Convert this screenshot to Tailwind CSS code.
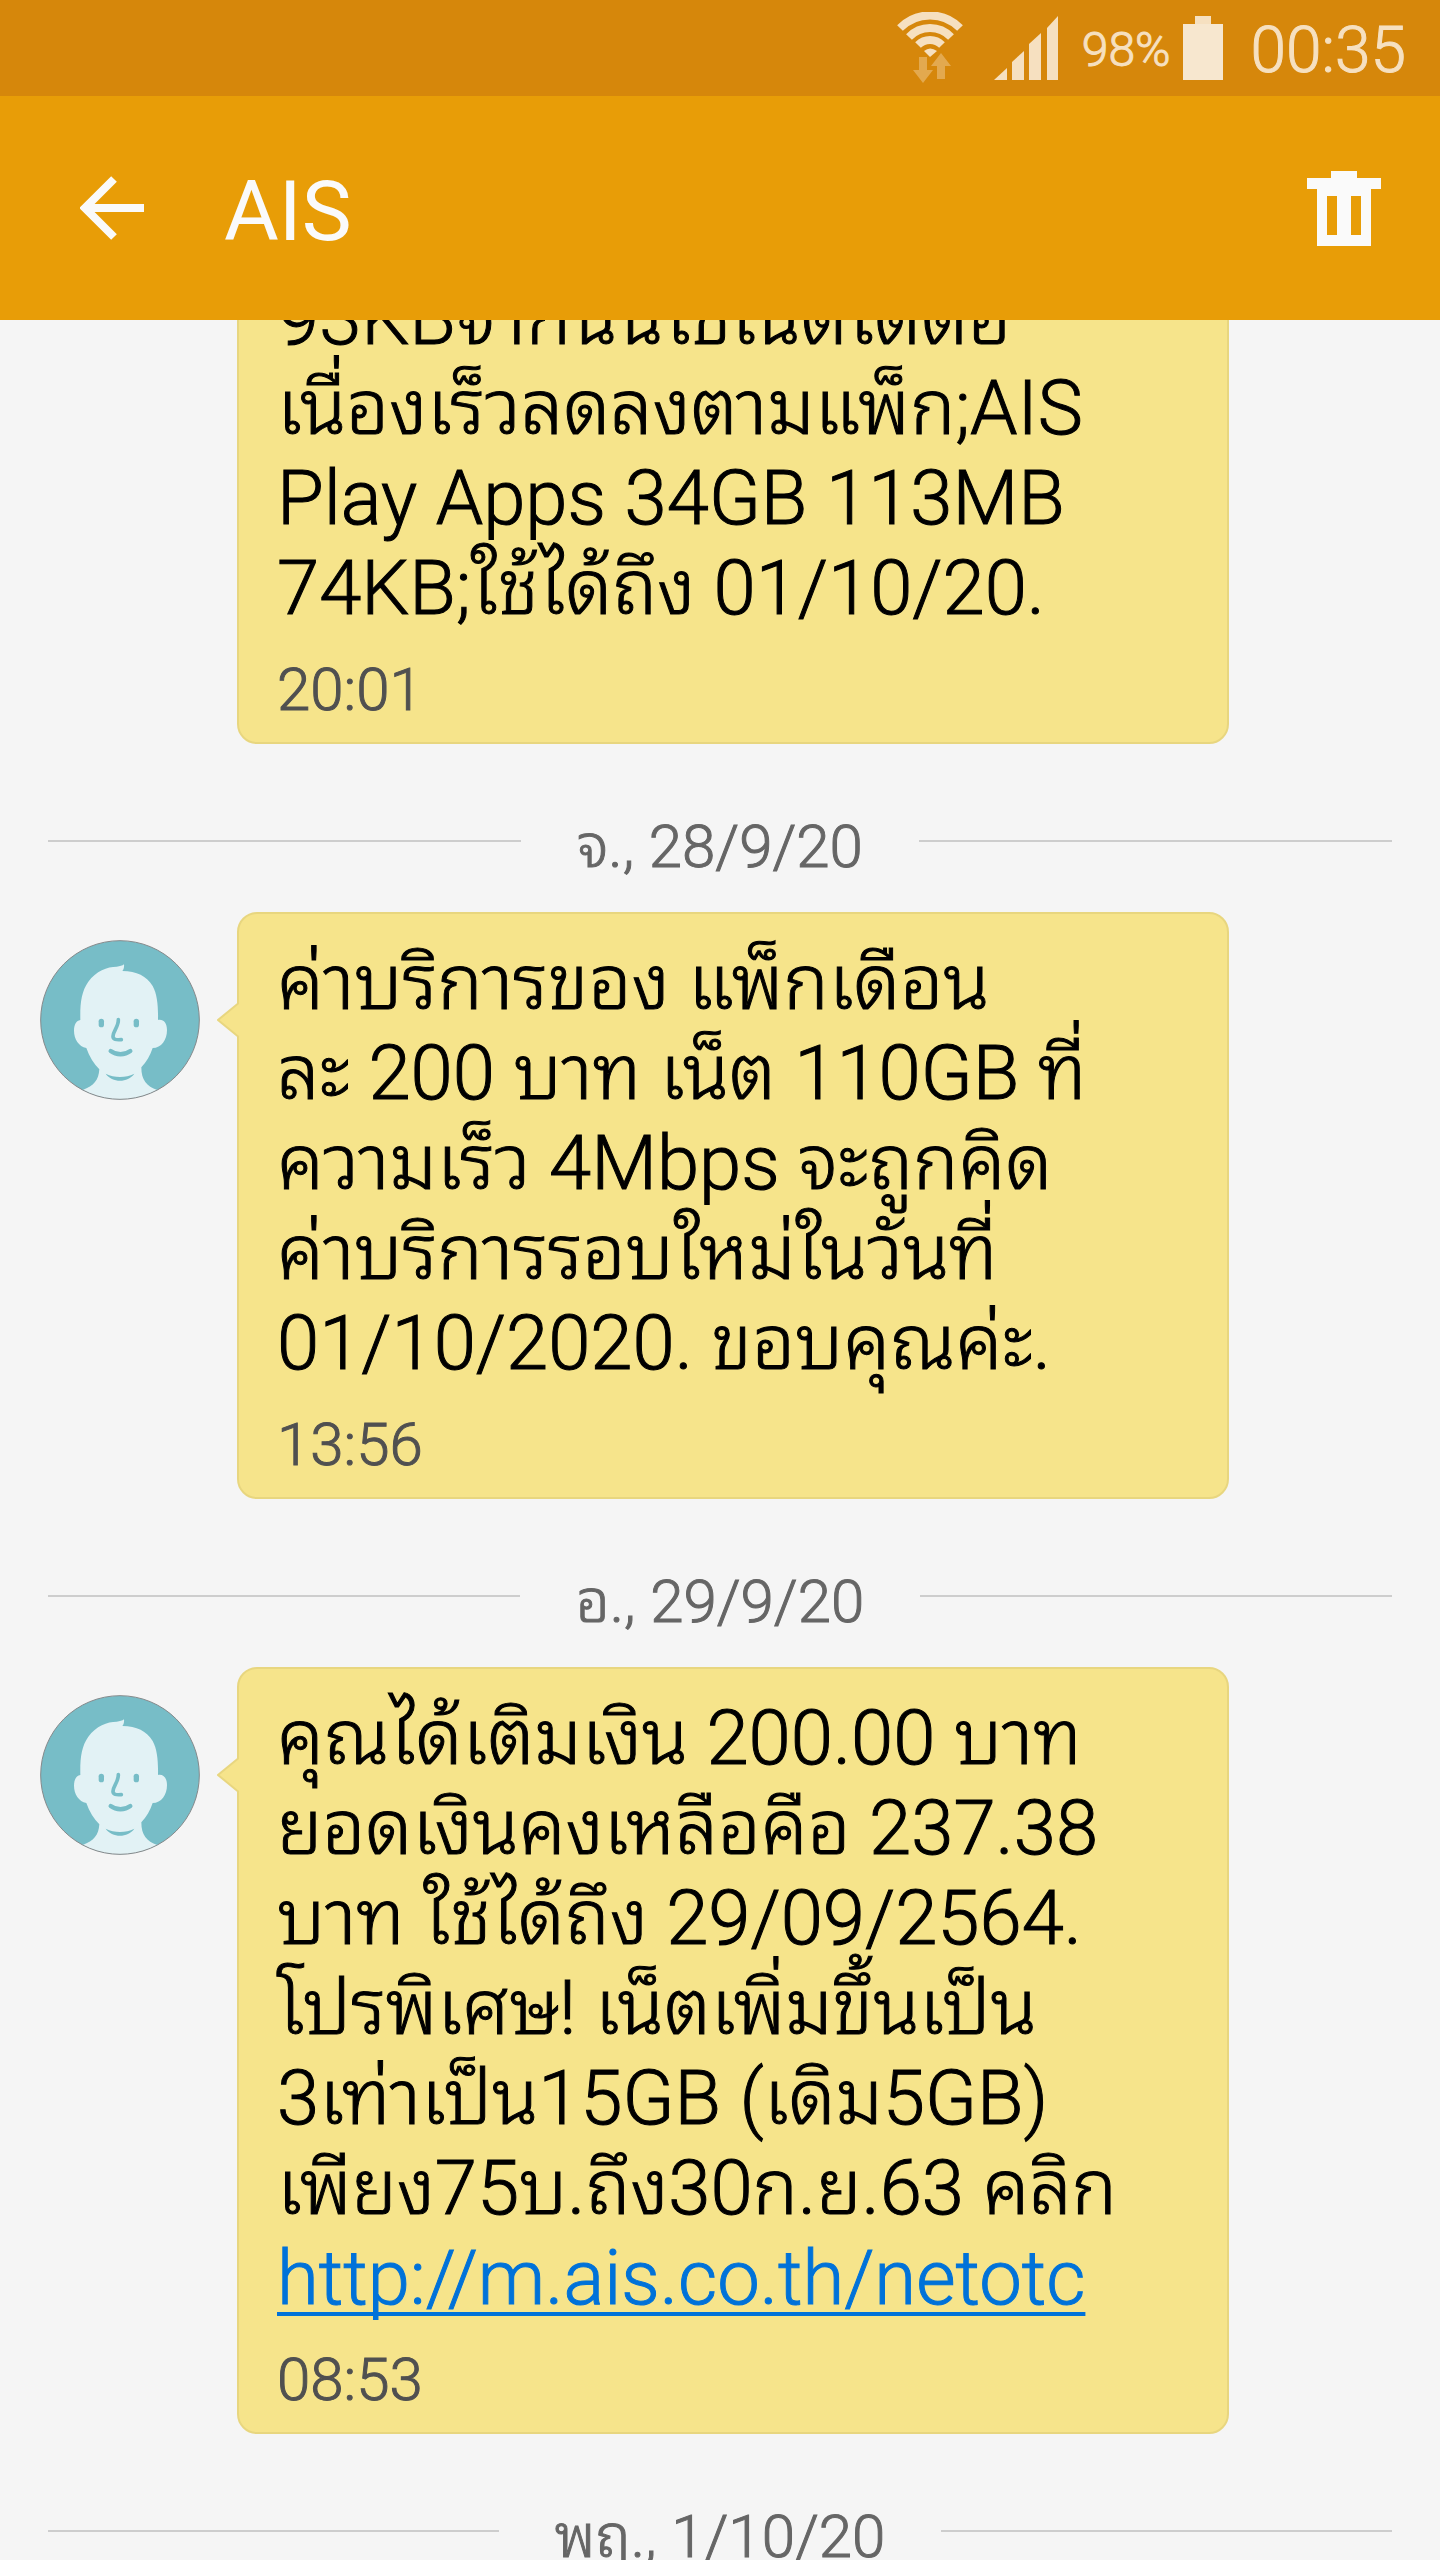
<!DOCTYPE html>
<html lang="th">
<head>
    <meta charset="UTF-8">
    <meta name="viewport" content="width=device-width, initial-scale=1.0">
    <title>AIS</title>
    <script src="https://cdn.jsdelivr.net/npm/@tailwindcss/browser@4"></script>
</head>
<body class="h-screen flex flex-col overflow-hidden bg-[#f5f5f5] font-[Roboto,'Noto_Sans_Thai_Looped','Noto_Sans',sans-serif]">

    <!-- Avatar, shared by all messages -->
    <svg class="absolute w-0 h-0">
        <symbol id="avatar" viewBox="60 120 480 480">
            <clipPath id="avatarClip"><circle cx="300" cy="360" r="238"/></clipPath>
            <circle cx="300" cy="360" r="238" fill="#77bdc7"/>
            <g clip-path="url(#avatarClip)">
                <path fill="#e2f2f5" d="M181 360C180 310 184 275 205 245C228 213 262 200 290 200C300 199 307 197 312 193C313 202 311 208 307 213C350 214 380 228 398 258C412 283 415 320 414 360C431 357 441 370 441 390C441 420 424 444 398 444C390 467 380 485 364 502C364 540 380 560 412 570L412 605H188V570C222 558 236 540 238 508C222 492 208 470 199 444C176 440 162 416 162 392C162 374 169 362 181 360Z"/>
                <rect x="236" y="356" width="16" height="26" rx="8" fill="#77bdc7"/>
                <rect x="341" y="356" width="16" height="26" rx="8" fill="#77bdc7"/>
                <path d="M295 359C296 380 279 393 279 409C279 419 288 420 304 419" fill="none" stroke="#77bdc7" stroke-width="11" stroke-linecap="round"/>
                <path d="M272 453C289 466 314 466 331 453" fill="none" stroke="#77bdc7" stroke-width="13" stroke-linecap="round"/>
                <path fill="#77bdc7" d="M257 521C284 534 316 534 343 521C323 549 277 549 257 521Z"/>
            </g>
            <circle cx="300" cy="360" r="238" fill="none" stroke="#85898b" stroke-width="3"/>
        </symbol>
        <symbol id="tail" viewBox="0 0 22 36">
            <path fill="#f6e48b" stroke="#e8d67f" stroke-width="2" d="M23 0L1 18L23 36"/>
        </symbol>
    </svg>

    <!-- Status bar -->
    <div class="shrink-0 h-24 pr-[34px] flex items-center justify-end bg-[#d6870b] text-[#f6e0c0] font-light [-webkit-text-stroke:1px]">
        <svg class="w-[68px] h-[72px] mr-[30px]" viewBox="897 12 68 72">
            <g fill="none" stroke="#f6e0c0" stroke-width="8">
                <path d="M901 28A42 42 0 0 1 961 28"/>
                <path d="M910 37A29 29 0 0 1 952 37"/>
                <path d="M919 45A17 17 0 0 1 943 45"/>
            </g>
            <path fill="#f6e0c0" d="M925 51Q931 46 938 51L931 57Z"/>
            <path fill="#e3a94f" d="M920 57H928V70H934L924 83L914 70H920Z"/>
            <path fill="#e3a94f" d="M938 79H946V66H952L942 53L932 66H938Z"/>
        </svg>
        <svg class="w-16 h-16 mr-6" viewBox="995 16 64 64" fill="#f6e0c0">
            <path d="M995 80L1008 68V80Z"/>
            <path d="M1013 80V62L1025 51V80Z"/>
            <path d="M1030 80V44L1042 33V80Z"/>
            <path d="M1048 80V28L1059 16V80Z"/>
        </svg>
        <span class="pt-1 text-[48px] leading-none">98%</span>
        <svg class="w-10 h-16 ml-3 mr-7" viewBox="0 0 40 64">
            <path fill="#f6e0c0" d="M12 0H28V9H12Z"/>
            <path fill="#f7e7cf" d="M0 8H40V64H0Z"/>
        </svg>
        <span class="pt-1.5 text-[64px] leading-none">00:35</span>
    </div>

    <!-- App bar -->
    <header class="shrink-0 h-56 pl-20 pr-[59px] flex items-center bg-[#e89d07] text-[#fafafa]">
        <button aria-label="Back" class="mr-20">
            <svg class="block w-16 h-16" viewBox="0 0 64 64">
                <path fill="none" stroke="#fafafa" stroke-width="8" d="M64 32H6M34 3L5 32L34 61"/>
            </svg>
        </button>
        <h1 class="flex-1 pt-2 text-[84px] leading-none">AIS</h1>
        <button aria-label="Delete">
            <svg class="block w-[74px] h-[75px]" viewBox="0 0 74 75">
                <path fill="#fafafa" fill-rule="evenodd" d="M24 0H50V7H74V18H64V75H10V18H0V7H24ZM20 25V64H30V25ZM44 25V64H54V25Z"/>
            </svg>
        </button>
    </header>

    <!-- Conversation, scrolled part of the way down -->
    <main class="flex-1 min-h-0 overflow-hidden font-light [-webkit-text-stroke:1px]">
        <div class="-mt-[73px]">

            <div class="pl-[237px] pr-[211px]">
                <div class="px-[38px] pt-6 pb-[17px] rounded-[20px] border-2 border-[#e8d67f] bg-[#f6e48b]">
                    <p class="text-[76px] leading-[90px] whitespace-nowrap text-black">93KBจากนั้นใช้เน็ตได้ต่อ<br>เนื่องเร็วลดลงตามแพ็ก;AIS<br>Play Apps 34GB 113MB<br>74KB;ใช้ได้ถึง 01/10/20.</p>
                    <p class="mt-[22px] text-[60px] leading-[70px] text-[#505050]">20:01</p>
                </div>
            </div>

            <div class="h-[168px] px-12 pt-[68px] pb-[30px] flex items-center gap-14">
                <span class="flex-1 h-0.5 mb-3 bg-[#cdcdcd]"></span>
                <h2 class="text-[60px] leading-[70px] text-[#666666]">จ., 28/9/20</h2>
                <span class="flex-1 h-0.5 mb-3 bg-[#cdcdcd]"></span>
            </div>

            <div class="pl-10 pr-[211px] flex items-start gap-[37px]">
                <svg class="shrink-0 w-40 h-40 mt-7"><use href="#avatar"/></svg>
                <div class="relative flex-1 px-[38px] pt-6 pb-[17px] rounded-[20px] border-2 border-[#e8d67f] bg-[#f6e48b]">
                    <svg class="absolute -left-[22px] top-[88px] w-[22px] h-9"><use href="#tail"/></svg>
                    <p class="text-[76px] leading-[90px] whitespace-nowrap text-black">ค่าบริการของ แพ็กเดือน<br>ละ 200 บาท เน็ต 110GB ที่<br>ความเร็ว 4Mbps จะถูกคิด<br>ค่าบริการรอบใหม่ในวันที่<br>01/10/2020. ขอบคุณค่ะ.</p>
                    <p class="mt-[22px] text-[60px] leading-[70px] text-[#505050]">13:56</p>
                </div>
            </div>

            <div class="h-[168px] px-12 pt-[68px] pb-[30px] flex items-center gap-14">
                <span class="flex-1 h-0.5 mb-3 bg-[#cdcdcd]"></span>
                <h2 class="text-[60px] leading-[70px] text-[#666666]">อ., 29/9/20</h2>
                <span class="flex-1 h-0.5 mb-3 bg-[#cdcdcd]"></span>
            </div>

            <div class="pl-10 pr-[211px] flex items-start gap-[37px]">
                <svg class="shrink-0 w-40 h-40 mt-7"><use href="#avatar"/></svg>
                <div class="relative flex-1 px-[38px] pt-6 pb-[17px] rounded-[20px] border-2 border-[#e8d67f] bg-[#f6e48b]">
                    <svg class="absolute -left-[22px] top-[88px] w-[22px] h-9"><use href="#tail"/></svg>
                    <p class="text-[76px] leading-[90px] whitespace-nowrap text-black">คุณได้เติมเงิน 200.00 บาท<br>ยอดเงินคงเหลือคือ 237.38<br>บาท ใช้ได้ถึง 29/09/2564.<br>โปรพิเศษ! เน็ตเพิ่มขึ้นเป็น<br>3เท่าเป็น15GB (เดิม5GB)<br>เพียง75บ.ถึง30ก.ย.63 คลิก<br><a href="http://m.ais.co.th/netotc" class="text-[#0072d9] underline decoration-4 underline-offset-8 [text-decoration-skip-ink:none]">http://m.ais.co.th/netotc</a></p>
                    <p class="mt-[22px] text-[60px] leading-[70px] text-[#505050]">08:53</p>
                </div>
            </div>

            <div class="h-[168px] px-12 pt-[68px] pb-[30px] flex items-center gap-14">
                <span class="flex-1 h-0.5 mb-3 bg-[#cdcdcd]"></span>
                <h2 class="text-[60px] leading-[70px] text-[#666666]">พฤ., 1/10/20</h2>
                <span class="flex-1 h-0.5 mb-3 bg-[#cdcdcd]"></span>
            </div>

        </div>
    </main>

</body>
</html>
